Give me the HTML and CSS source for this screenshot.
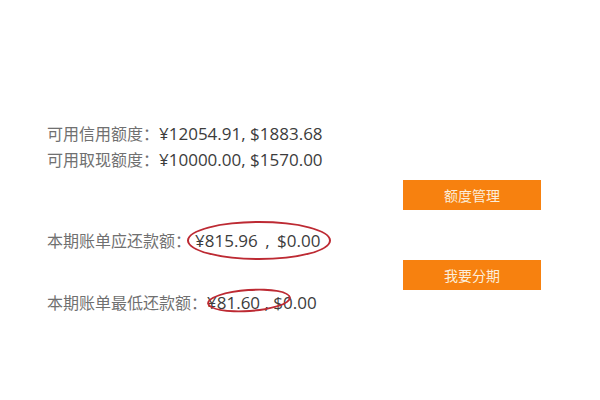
FILE: index.html
```html
<!DOCTYPE html>
<html lang="zh-CN">
<head>
    <meta charset="UTF-8">
    <title>额度信息</title>
    <link rel="stylesheet" href="styles.css">
</head>
<body>

<div class="page">
    <div class="info">
        <div class="row"><span class="label">可用信用额度：</span><span class="amount">¥12054.91, $1883.68</span></div>
        <div class="row"><span class="label">可用取现额度：</span><span class="amount">¥10000.00, $1570.00</span></div>
        <div class="row row-due"><span class="label">本期账单应还款额：</span><span class="amount marked wide">¥815.96 , $0.00<i class="ring ring-due"></i></span></div>
        <div class="row row-min"><span class="label">本期账单最低还款额：</span><span class="amount marked">¥81.60 , $0.00<i class="ring ring-min"></i></span></div>
    </div>
    <div class="actions">
        <button class="btn">额度管理</button>
        <button class="btn">我要分期</button>
    </div>
</div>

</body>
</html>
```

FILE: styles.css
```css
body {
    margin: 0;
    background: #fff;
    font-family: "Noto Sans CJK TC", "Liberation Sans", sans-serif;
}
.page {
    display: flex;
    width: 600px;
    height: 400px;
}
.info {
    width: 356px;
    padding: 122px 0 0 47px;
}
.row {
    height: 26px;
    line-height: 22px;
    white-space: nowrap;
}
.label {
    font-size: 16px;
    color: #707070;
}
.amount {
    font-family: "Open Sans", "Liberation Sans", sans-serif;
    font-size: 17px;
    color: #3c3c3c;
}
.wide {
    margin-left: 4px;
    word-spacing: 3px;
}
.row-due {
    margin-top: 55px;
}
.row-min {
    margin-top: 36px;
}
.marked {
    position: relative;
}
.ring {
    position: absolute;
    border: 2px solid #bd2a33;
    border-radius: 50%;
}
.ring-due {
    left: -8px;
    top: -8px;
    width: 140px;
    height: 35px;
}
.ring-min {
    left: 0;
    top: -2px;
    width: 80px;
    height: 19px;
    transform: rotate(-4deg);
}
.actions {
    display: flex;
    flex-direction: column;
    gap: 50px;
    padding-top: 180px;
}
.btn {
    width: 138px;
    height: 30px;
    border: 0;
    background: #f7810f;
    color: #fbeedc;
    font-family: "Noto Sans CJK SC", sans-serif;
    font-size: 14px;
    padding: 0;
}
```
